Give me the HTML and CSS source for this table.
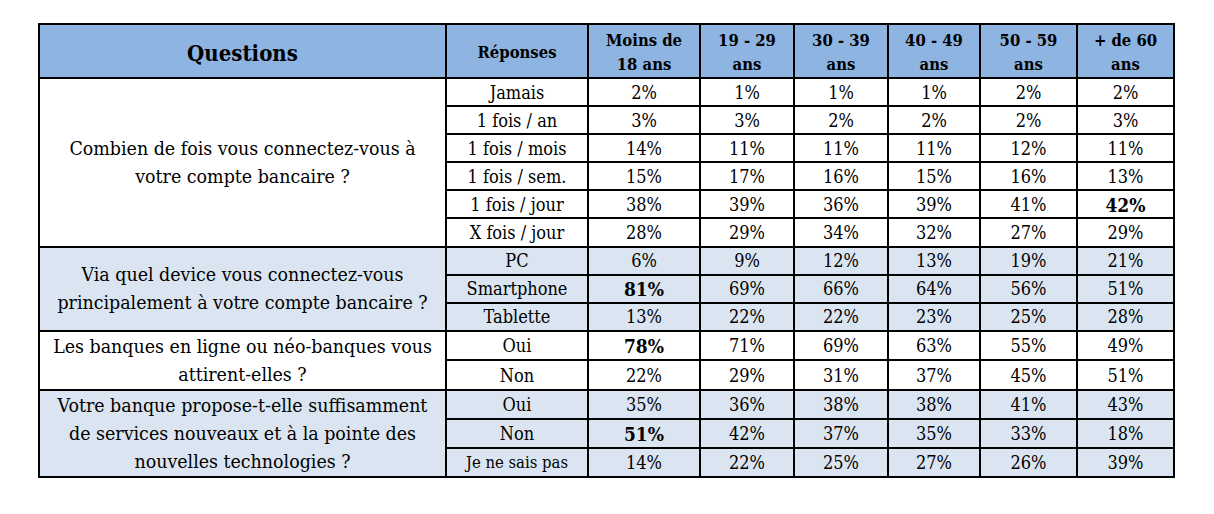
FILE: index.html
```html
<!DOCTYPE html>
<html lang="fr">
<head>
<meta charset="utf-8">
<title>Enquête banque</title>
<link rel="stylesheet" href="styles.css">
</head>
<body>
<table class="survey">
  <colgroup>
    <col class="c-q"><col class="c-r"><col class="c-a1"><col class="c-a2"><col class="c-a3"><col class="c-a4"><col class="c-a5"><col class="c-a6">
  </colgroup>
  <thead>
    <tr class="head">
      <th class="h-q">Questions</th>
      <th class="h-r">Réponses</th>
      <th>Moins de<br>18 ans</th>
      <th>19 - 29<br>ans</th>
      <th>30 - 39<br>ans</th>
      <th>40 - 49<br>ans</th>
      <th>50 - 59<br>ans</th>
      <th>+ de 60<br>ans</th>
    </tr>
  </thead>
  <tbody>
    <tr><td class="q" rowspan="6">Combien de fois vous connectez-vous à<br>votre compte bancaire ?</td><td>Jamais</td><td>2%</td><td>1%</td><td>1%</td><td>1%</td><td>2%</td><td>2%</td></tr>
    <tr><td>1 fois / an</td><td>3%</td><td>3%</td><td>2%</td><td>2%</td><td>2%</td><td>3%</td></tr>
    <tr><td>1 fois / mois</td><td>14%</td><td>11%</td><td>11%</td><td>11%</td><td>12%</td><td>11%</td></tr>
    <tr><td>1 fois / sem.</td><td>15%</td><td>17%</td><td>16%</td><td>15%</td><td>16%</td><td>13%</td></tr>
    <tr><td>1 fois / jour</td><td>38%</td><td>39%</td><td>36%</td><td>39%</td><td>41%</td><td class="hi">42%</td></tr>
    <tr><td>X fois / jour</td><td>28%</td><td>29%</td><td>34%</td><td>32%</td><td>27%</td><td>29%</td></tr>

    <tr class="shade"><td class="q" rowspan="3">Via quel device vous connectez-vous<br>principalement à votre compte bancaire ?</td><td>PC</td><td>6%</td><td>9%</td><td>12%</td><td>13%</td><td>19%</td><td>21%</td></tr>
    <tr class="shade"><td>Smartphone</td><td class="hi">81%</td><td>69%</td><td>66%</td><td>64%</td><td>56%</td><td>51%</td></tr>
    <tr class="shade"><td>Tablette</td><td>13%</td><td>22%</td><td>22%</td><td>23%</td><td>25%</td><td>28%</td></tr>

    <tr><td class="q" rowspan="2">Les banques en ligne ou néo-banques vous<br>attirent-elles ?</td><td>Oui</td><td class="hi">78%</td><td>71%</td><td>69%</td><td>63%</td><td>55%</td><td>49%</td></tr>
    <tr><td>Non</td><td>22%</td><td>29%</td><td>31%</td><td>37%</td><td>45%</td><td>51%</td></tr>

    <tr class="shade"><td class="q" rowspan="3">Votre banque propose-t-elle suffisamment<br>de services nouveaux et à la pointe des<br>nouvelles technologies ?</td><td>Oui</td><td>35%</td><td>36%</td><td>38%</td><td>38%</td><td>41%</td><td>43%</td></tr>
    <tr class="shade"><td>Non</td><td class="hi">51%</td><td>42%</td><td>37%</td><td>35%</td><td>33%</td><td>18%</td></tr>
    <tr class="shade"><td class="small">Je ne sais pas</td><td>14%</td><td>22%</td><td>25%</td><td>27%</td><td>26%</td><td>39%</td></tr>
  </tbody>
</table>
</body>
</html>
```

FILE: styles.css
```css
html, body {
  margin: 0;
  padding: 0;
  background: #ffffff;
}

body {
  padding: 23px 0 0 38px;
  color: #000000;
  font-family: "DejaVu Serif Condensed", "DejaVu Serif", serif;
  font-stretch: condensed;
}

.survey {
  border-collapse: collapse;
  table-layout: fixed;
  width: 1135px;
  border: 2px solid #000;
}

.survey th,
.survey td {
  font-family: "DejaVu Serif Condensed", "DejaVu Serif", serif;
  font-stretch: condensed;
  border: 2px solid #000;
  padding: 0 4px;
  text-align: center;
  vertical-align: middle;
}

.c-q { width: 407px; }
.c-r { width: 142px; }
.c-a1 { width: 112px; }
.c-a2 { width: 94px; }
.c-a3 { width: 94px; }
.c-a4 { width: 92px; }
.c-a5 { width: 97px; }
.c-a6 { width: 97px; }

.head th {
  background: #8eb4e2;
  font-weight: bold;
  font-size: 16.5px;
  line-height: 24px;
  height: 49px;
  padding-top: 3px;
}

.head .h-q {
  font-size: 22px;
}

.survey td {
  font-size: 18px;
  line-height: 22px;
  height: 25.1px;
  padding-top: 1px;
}

.survey td.q {
  line-height: 28px;
  font-size: 19.4px;
  padding-top: 1px;
}

.survey td.small {
  font-size: 16.5px;
}

.shade td {
  background: #dbe5f1;
}

.survey td.hi {
  font-weight: bold;
  font-size: 19px;
}
```
